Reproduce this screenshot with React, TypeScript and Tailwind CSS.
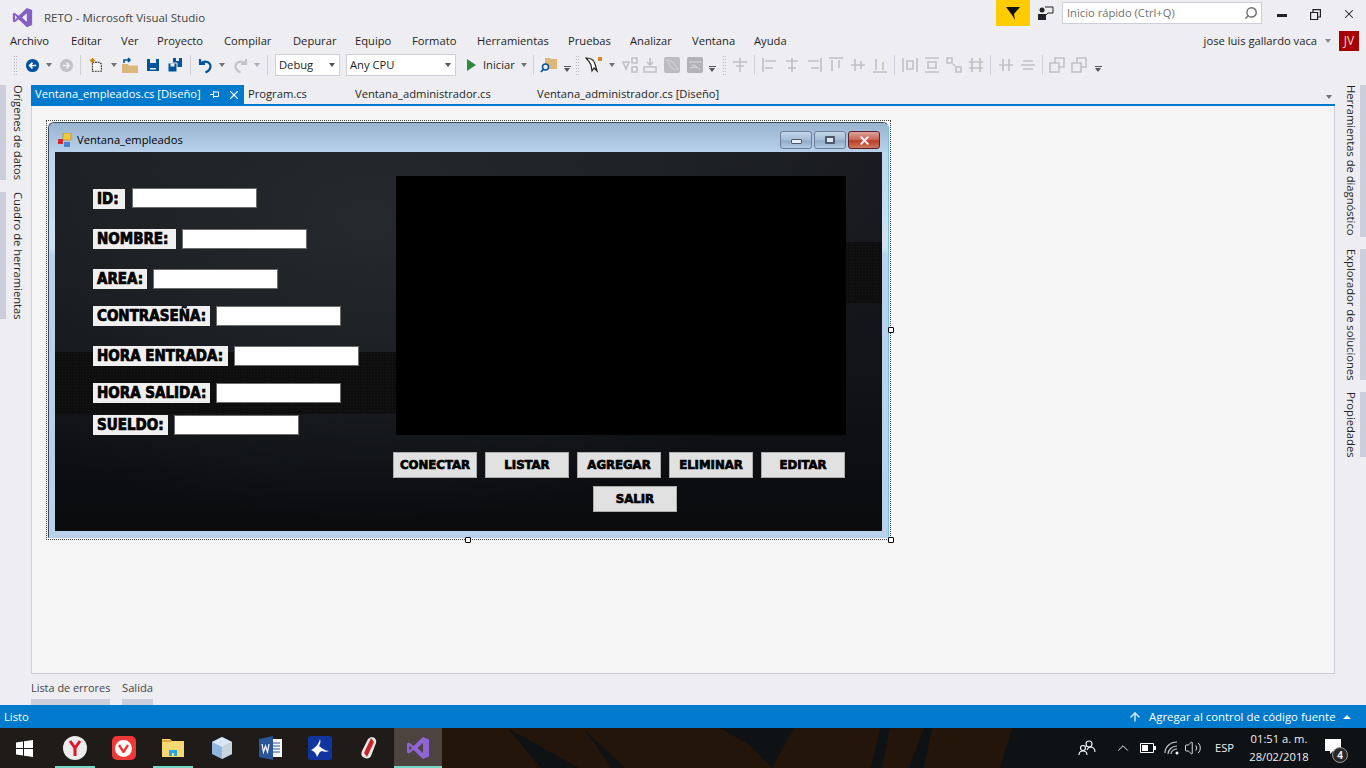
import type { ReactNode } from 'react';
import { ChevronUp, Search, X, ArrowUp, Volume2 } from 'lucide-react';

const menus = [
  ['Archivo', 10, 41],
  ['Editar', 71, 30],
  ['Ver', 121, 16],
  ['Proyecto', 157, 47],
  ['Compilar', 224, 49],
  ['Depurar', 293, 42],
  ['Equipo', 355, 37],
  ['Formato', 412, 45],
  ['Herramientas', 477, 71],
  ['Pruebas', 568, 42],
  ['Analizar', 630, 42],
  ['Ventana', 692, 42],
  ['Ayuda', 754, 34],
] as const;

const fields = [
  { name: 'ID:', top: 37, labelW: 32, inputX: 77 },
  { name: 'NOMBRE:', top: 77, labelW: 83, inputX: 127 },
  { name: 'AREA:', top: 117, labelW: 54, inputX: 98 },
  { name: 'CONTRASEÑA:', top: 154, labelW: 117, inputX: 161 },
  { name: 'HORA ENTRADA:', top: 194, labelW: 135, inputX: 179 },
  { name: 'HORA SALIDA:', top: 231, labelW: 117, inputX: 161 },
  { name: 'SUELDO:', top: 263, labelW: 75, inputX: 119 },
];

const buttons = [
  { name: 'CONECTAR', x: 338, y: 300 },
  { name: 'LISTAR', x: 430, y: 300 },
  { name: 'AGREGAR', x: 522, y: 300 },
  { name: 'ELIMINAR', x: 614, y: 300 },
  { name: 'EDITAR', x: 706, y: 300 },
  { name: 'SALIR', x: 538, y: 334 },
];

function VsLogo({ size, color = '#865fc5' }: { size: number; color?: string }) {
  return (
    <svg width={size} height={size} viewBox="0 0 24 24">
      <path
        fill={color}
        d="M17 1l6 2.500v17L17 23 7.500 14 3 17.500 1 16.500v-9l2-1L7.500 10 17 1zM3.500 9.500v5L6 12 3.500 9.500zM17 7l-5.500 5 5.500 5V7z"
      />
    </svg>
  );
}

function Caret({ color = '#717171' }: { color?: string }) {
  return <span className="block w-0 h-0 border-x-[3.5px] border-x-transparent border-t-[4px]" style={{ borderTopColor: color }} />;
}

function Grip() {
  return <span className="block w-[5px] h-[20px] bg-[radial-gradient(#a0a0a8_0.7px,transparent_0.8px)] bg-[length:2.5px_3px]" />;
}

function Sep() {
  return <span className="block w-px h-[20px] shrink-0 bg-[#ccced8]" />;
}

function Overflow() {
  return (
    <span className="flex flex-col items-center gap-[1px] mt-[8px]">
      <span className="w-[7px] h-px bg-[#555]" />
      <Caret color="#555" />
    </span>
  );
}

// one toolbar cell, fixed width so the icons land where the VS toolbar has them
function Slot({ w, children }: { w: number; children?: ReactNode }) {
  return (
    <span className="flex items-center justify-center shrink-0 h-[22px]" style={{ width: w }}>
      {children}
    </span>
  );
}

function Gray({ d }: { d: string }) {
  return (
    <svg width="18" height="18" viewBox="0 0 18 18" fill="none" stroke="#c0c0c5" strokeWidth="1.6">
      <path d={d} />
    </svg>
  );
}

function Combo({ w, text }: { w: number; text: string }) {
  return (
    <span className="flex items-center justify-between bg-white border border-[#ccced8] h-[22px] pl-[3px] pr-[4px] shrink-0 text-[#1e1e1e]" style={{ width: w }}>
      {text}
      <Caret color="#555" />
    </span>
  );
}

function Toolbar() {
  return (
    <div className="flex items-center h-[30px] pl-[12px] shrink-0 text-[#1e1e1e]">
      <Slot w={7}><Grip /></Slot>
      <Slot w={5} />
      <Slot w={16}>
        <svg width="15" height="15" viewBox="0 0 16 16">
          <circle cx="8" cy="8" r="7" fill="#00539c" />
          <path d="M12 8H5M8 5L5 8l3 3" stroke="#fff" strokeWidth="1.8" fill="none" />
        </svg>
      </Slot>
      <Slot w={18}><Caret /></Slot>
      <Slot w={16}>
        <svg width="15" height="15" viewBox="0 0 16 16">
          <circle cx="8" cy="8" r="7" fill="#c4c4c8" />
          <path d="M4 8h7M8 5l3 3-3 3" stroke="#eeeef2" strokeWidth="1.8" fill="none" />
        </svg>
      </Slot>
      <Slot w={6} />
      <Sep />
      <Slot w={7} />
      <Slot w={16}>
        <svg width="18" height="18" viewBox="0 0 18 18" fill="none">
          <path d="M5 6h8l2 2v8H5z" fill="#f6f6f6" stroke="#333" strokeWidth="1.3" strokeDasharray="2 1" />
          <path d="M5 1v6M2 4h6M3 2l4 4M7 2L3 6" stroke="#c98a1a" strokeWidth="1.2" />
        </svg>
      </Slot>
      <Slot w={20}><Caret /></Slot>
      <Slot w={12}>
        <svg width="18" height="18" viewBox="0 0 18 18" className="shrink-0">
          <path d="M1 8h6l1 1.500h9V17H1z" fill="#dcb67a" />
          <path d="M3 7V4h6M7 2l2 2-2 2" stroke="#00539c" strokeWidth="1.6" fill="none" />
        </svg>
      </Slot>
      <Slot w={34}>
        <svg width="14" height="14" viewBox="0 0 14 14">
          <path d="M1 1h12v12H1z" fill="#00539c" />
          <path d="M4 1h6v4H4z" fill="#eeeef2" />
          <path d="M4 10h6v1.500H4z" fill="#eeeef2" />
        </svg>
      </Slot>
      <Slot w={10}>
        <svg width="16" height="16" viewBox="0 0 16 16" className="shrink-0">
          <path d="M6 1h9v9H6z" fill="#00539c" />
          <path d="M9 1h3v3H9z" fill="#eeeef2" />
          <path d="M1 6h9v9H1z" fill="#00539c" stroke="#eeeef2" />
          <path d="M3.500 6.500h4v3h-4z" fill="#eeeef2" />
        </svg>
      </Slot>
      <Slot w={10} />
      <Sep />
      <Slot w={28}>
        <svg width="17" height="17" viewBox="0 0 17 17" fill="none">
          <path d="M3 2v5h5M3.500 7C6 3.500 13 4 13.500 9c.3 3-2 5-5 6.500" stroke="#00539c" strokeWidth="2.200" />
        </svg>
      </Slot>
      <Slot w={6}><Caret /></Slot>
      <Slot w={30}>
        <svg width="17" height="17" viewBox="0 0 17 17" fill="none">
          <path d="M14 2v5H9M13.500 7C11 3.500 4 4 3.500 9c-.3 3 2 5 5 6.500" stroke="#c4c4c8" strokeWidth="2.200" />
        </svg>
      </Slot>
      <Slot w={4}><Caret color="#b0b0b4" /></Slot>
      <Slot w={8} />
      <Sep />
      <Slot w={7} />
      <Combo w={65} text="Debug" />
      <Slot w={6} />
      <Combo w={110} text="Any CPU" />
      <Slot w={8} />
      <Slot w={14}>
        <span className="block w-0 h-0 border-y-[6px] border-y-transparent border-l-[9px] border-l-[#2f8a3c]" />
      </Slot>
      <span className="ml-[5px] w-[36px] whitespace-nowrap shrink-0">Iniciar</span>
      <Slot w={10}><Caret /></Slot>
      <Slot w={4} />
      <Sep />
      <Slot w={30}>
        <svg width="18" height="18" viewBox="0 0 18 18">
          <path d="M5 2h5l1 1h6v10H5z" fill="#dcb67a" />
          <circle cx="5.500" cy="11" r="3" fill="#eeeef2" stroke="#00539c" strokeWidth="1.500" />
          <path d="M3.500 13L1 16" stroke="#00539c" strokeWidth="1.800" />
        </svg>
      </Slot>
      <Slot w={6}><Overflow /></Slot>
      <Slot w={4} />
      <Slot w={6}><Grip /></Slot>
      <Slot w={28}>
        <svg width="19" height="18" viewBox="0 0 19 18" fill="none">
          <path d="M1 2c4 0 8 2 9 6l2 7-3-3-2 3-1-6C5 6 3 4 1 2z" fill="#fff" stroke="#222" strokeWidth="1.200" />
          <path d="M13 1h4v4h-4z" fill="#d08a2c" />
        </svg>
      </Slot>
      <Slot w={8}><Caret /></Slot>
      <Slot w={28}><Gray d="M2 6h6l-3 7zM11 2h5v5h-5zM11 11h5v5h-5z" /></Slot>
      <Slot w={12}>
        <svg width="18" height="18" viewBox="0 0 18 18" fill="none" stroke="#c0c0c5" strokeWidth="1.6" className="shrink-0">
          <path d="M9 2v7M6 6l3 3 3-3M3 11h12v5H3z" />
        </svg>
      </Slot>
      <Slot w={32}>
        <span className="flex items-center justify-center w-[16px] h-[16px] rounded-[2px] bg-[#bcbcc0]">
          <svg width="14" height="12" viewBox="0 0 14 12" fill="none" stroke="#dcdce0"><path d="M1 1c5 0 9 3 12 10M3 3c1 4 4 6 7 8" /></svg>
        </span>
      </Slot>
      <Slot w={14}>
        <span className="flex items-center justify-center w-[16px] h-[16px] shrink-0 rounded-[2px] bg-[#b3b3b7]">
          <svg width="14" height="12" viewBox="0 0 14 12" fill="none" stroke="#dcdce0"><path d="M1 3h12M4 6c3 0 6 2 8 5M2 9c3-1 5-1 7 0" /></svg>
        </span>
      </Slot>
      <Slot w={20}><Overflow /></Slot>
      <Slot w={4}><Grip /></Slot>
      <Slot w={28}><Gray d="M9 2v14M2 6h14M5 10h8" /></Slot>
      <Sep />
      <Slot w={4} />
      {['M2 2v14M4 5h11M4 12h8', 'M9 2v14M3 5h12M5 12h8', 'M16 2v14M3 5h11M6 12h8', 'M2 2h14M5 4v11M12 4v8', 'M2 9h14M6 3v12M12 5v8', 'M2 16h14M5 3v11M12 6v8'].map((d) => (
        <Slot w={22} key={d}><Gray d={d} /></Slot>
      ))}
      <Slot w={3} />
      <Sep />
      <Slot w={4} />
      {['M2 2v14M16 2v14M6 5h6v8H6z', 'M2 2h14M2 16h14M5 6h8v6H5z', 'M2 2h5v5H2zM11 11h5v5h-5zM8 8l2 2', 'M5 2v14M13 2v14M2 6h14M2 12h14'].map((d) => (
        <Slot w={22} key={d}><Gray d={d} /></Slot>
      ))}
      <Slot w={3} />
      <Sep />
      <Slot w={4} />
      <Slot w={22}><Gray d="M2 9h14M6 3v12M12 3v12" /></Slot>
      <Slot w={22}><Gray d="M2 9h14M4 5h10M4 13h10" /></Slot>
      <Slot w={3} />
      <Sep />
      <Slot w={3} />
      <Slot w={22}><Gray d="M2 7h9v9H2zM7 7V2h9v9h-5" /></Slot>
      <Slot w={22}><Gray d="M2 7h9v9H2zM7 7V2h9v9h-5" /></Slot>
      <Slot w={16}><Overflow /></Slot>
    </div>
  );
}

function VerticalTab({ text, h, side, mt = 0 }: { text: string; h: number; side: 'left' | 'right'; mt?: number }) {
  return (
    <div className="flex shrink-0" style={{ height: h, marginTop: mt }}>
      {side === 'left' && <span className="w-[6px] bg-[#cccedb]" />}
      <span className="[writing-mode:vertical-rl] leading-[16px] w-[20px] pl-[2px] whitespace-nowrap text-[#1e1e1e]">{text}</span>
      {side === 'right' && <span className="w-[6px] ml-[1px] bg-[#cccedb]" />}
    </div>
  );
}

function DocTabs() {
  return (
    <div className="flex items-stretch h-[19px] text-[#1e1e1e] relative">
      <div className="flex items-center w-[213px] bg-[#007acc] text-white pl-[4px]">
        <span className="w-[170px] whitespace-nowrap">Ventana_empleados.cs [Diseño]</span>
        <svg width="10" height="9" viewBox="0 0 10 9" fill="none" stroke="#fff" className="ml-[5px]">
          <path d="M0 4.500h3.500M3.500 1v7M3.500 2h5v4.500h-5" />
        </svg>
        <X size={14} className="ml-[7px]" />
      </div>
      <span className="ml-[4px] w-[107px] flex items-center">Program.cs</span>
      <span className="w-[182px] flex items-center whitespace-nowrap">Ventana_administrador.cs</span>
      <span className="flex items-center whitespace-nowrap">Ventana_administrador.cs [Diseño]</span>
      <span className="absolute right-[3px] top-[10px]"><Caret /></span>
    </div>
  );
}

function Handle({ className }: { className: string }) {
  return <span className={`absolute w-[6px] h-[6px] bg-white border border-black rounded-[1px] ${className}`} />;
}

function WinButton({ kind }: { kind: 'min' | 'max' | 'close' }) {
  if (kind === 'close') {
    return (
      <span className="w-[32px] h-[18px] rounded-[3px] border border-[#5a2030] bg-[linear-gradient(#dba39c,#c9614f_50%,#b83c26_55%,#cf7a5e)] flex items-center justify-center">
        <X size={13} strokeWidth={3.500} className="text-[#eef0f4]" />
      </span>
    );
  }
  return (
    <span className="w-[32px] h-[18px] rounded-[3px] border border-[#6d7f96] bg-[linear-gradient(#c3d5e8,#a4bcd6_50%,#8ea9c6_55%,#b5cce3)] flex items-center justify-center">
      {kind === 'min' ? (
        <span className="w-[11px] h-[5px] mt-[3px] bg-[#e8edf3] border border-[#4e5a6c] rounded-[1px]" />
      ) : (
        <span className="w-[10px] h-[8px] border-2 border-[#4e5a6c] bg-[#dfe8f2] rounded-[1px]" />
      )}
    </span>
  );
}

function DesignForm() {
  const band = 'absolute bg-[#0e0e0f] bg-[radial-gradient(#161617_1px,transparent_1px)] bg-[length:3px_3px]';
  const display = "font-bold text-black font-['DejaVu_Sans_Condensed','DejaVu_Sans',sans-serif] [-webkit-text-stroke:0.7px_#000]";
  return (
    <div className="relative w-[845px] h-[420px] ml-[14px] mt-[14px] border border-dotted border-[#444] p-[1px]">
      <Handle className="left-[418px] bottom-[-4px]" />
      <Handle className="right-[-4px] bottom-[-4px]" />
      <Handle className="right-[-4px] top-[206px]" />
      <div className="w-[841px] h-[416px] rounded-t-[6px] border border-[#3b4a5e] border-r-[#6fc3ea] border-b-[#b8d1ea] bg-[linear-gradient(#b9d1ea,#d0e1f2_30%,#b9d1ea_32%,#b9d1ea)] flex flex-col">
        <div className="h-[29px] flex items-center pt-[5px] pl-[9px] pr-[1px] rounded-t-[6px] bg-[linear-gradient(#99b4d1,#b9d1ea)] shrink-0">
          <svg width="14" height="14" viewBox="0 0 14 14" className="shrink-0">
            <path d="M0 6h5v5H0z" fill="#d12a2a" />
            <path d="M5 0h8v7H5z" fill="#f5c73d" stroke="#a88420" strokeWidth="0.600" />
            <path d="M6 9h6v5H6z" fill="#4d82d6" />
          </svg>
          <span className="ml-[5px] mt-[1px] text-black">Ventana_empleados</span>
          <span className="ml-auto flex gap-[2px] mr-[7px]">
            <WinButton kind="min" />
            <WinButton kind="max" />
            <WinButton kind="close" />
          </span>
        </div>
        <div className="relative ml-[6px] w-[827px] h-[379px] overflow-hidden bg-[radial-gradient(ellipse_520px_300px_at_38%_18%,#25292e,transparent),linear-gradient(#1a1c21,#111317_60%,#0a0b0d)]">
          <span className={`${band} left-0 top-[200px] w-[341px] h-[62px]`} />
          <span className={`${band} left-[791px] top-[90px] w-[36px] h-[61px]`} />
          <span className="absolute left-[341px] top-[24px] w-[450px] h-[259px] bg-black" />
          {fields.map((f) => (
            <div key={f.name}>
              <span
                className={`absolute left-[38px] h-[20px] bg-[#f0f0f0] pl-[4px] pt-[1px] flex items-center text-[15px] whitespace-nowrap ${display}`}
                style={{ top: f.top, width: f.labelW }}
              >
                {f.name}
              </span>
              <span
                className="absolute w-[125px] h-[20px] bg-white border border-[#6d6d6d]"
                style={{ top: f.top - (f.name === 'ID:' ? 1 : 0), left: f.inputX }}
              />
            </div>
          ))}
          {buttons.map((b) => (
            <span
              key={b.name}
              className={`absolute w-[84px] h-[26px] bg-[#e1e1e1] border border-[#adadad] flex items-center justify-center text-[13px] ${display}`}
              style={{ left: b.x, top: b.y }}
            >
              {b.name}
            </span>
          ))}
        </div>
      </div>
    </div>
  );
}

function TaskIcon({ active, lit, children }: { active?: boolean; lit?: boolean; children: ReactNode }) {
  return (
    <div className={`relative h-[40px] flex items-center justify-center shrink-0 ${active ? 'w-[48px] ml-[1px] bg-[#4d4440]' : 'w-[49px]'}`}>
      {children}
      {lit && <span className={`absolute bottom-0 h-[2px] bg-[#76d7c4] ${active ? 'inset-x-0' : 'left-[5px] right-[4px]'}`} />}
    </div>
  );
}

function Wallpaper() {
  return (
    <svg className="absolute inset-0" width="1366" height="40" viewBox="0 0 1366 40">
      <path d="M442 0H1012L1000 40H442z" fill="#24150b" />
      <path d="M1012 0H1366V40H1000z" fill="#0e1215" />
      <g fill="#0e1215">
        <path d="M507 0L579 40H541z" />
        <path d="M583 0L625 40H612z" />
        <path d="M720 0H794L772 40 751 18z" />
        <path d="M880 0H890L882 40H871z" />
        <path d="M924 0H932L924 40H909z" />
      </g>
    </svg>
  );
}

function Taskbar() {
  return (
    <div className="relative flex items-center h-[40px] bg-[#1e1b19] text-white overflow-hidden shrink-0">
      <Wallpaper />
      <div className="relative w-[48px] flex justify-center">
        <svg width="17" height="17" viewBox="0 0 17 17" fill="#fff">
          <path d="M0 2.500l7-1v6.500H0zM8 1.300L17 0v8H8zM0 9h7v6.500l-7-1zM8 9h9v8l-9-1.300z" />
        </svg>
      </div>
      <div className="relative w-[2px]" />
      <TaskIcon lit>
        <span className="w-[24px] h-[24px] rounded-full bg-[#ececec] flex items-center justify-center">
          <svg width="14" height="16" viewBox="0 0 14 16" fill="none" stroke="#e0162b" strokeWidth="3">
            <path d="M2 1l5 7 5-7M7 8v8" />
          </svg>
        </span>
      </TaskIcon>
      <TaskIcon>
        <span className="w-[24px] h-[24px] rounded-[5px] bg-[#ef3939] flex items-center justify-center">
          <span className="w-[17px] h-[17px] rounded-full bg-white flex items-center justify-center">
            <svg width="11" height="9" viewBox="0 0 11 9" fill="none" stroke="#ef3939" strokeWidth="2.400"><path d="M1 1l4.500 7L10 1" /></svg>
          </span>
        </span>
      </TaskIcon>
      <TaskIcon lit>
        <svg width="24" height="20" viewBox="0 0 24 20">
          <path d="M1 1h8l2 2h12v16H1z" fill="#f8d775" />
          <path d="M1 3h9" stroke="#e3a92e" strokeWidth="2" />
          <path d="M8 18v-6h8v6h-3v-3h-2v3z" fill="#29a7e1" />
        </svg>
      </TaskIcon>
      <TaskIcon>
        <svg width="24" height="24" viewBox="0 0 24 24">
          <path d="M12 1l10 5v12l-10 5-10-5V6z" fill="#8fb6dc" />
          <path d="M12 1l10 5-10 5L2 6z" fill="#d8e8f5" />
          <path d="M12 11l10-5v12l-10 5z" fill="#c7d3dd" />
        </svg>
      </TaskIcon>
      <TaskIcon>
        <svg width="24" height="24" viewBox="0 0 24 24">
          <path d="M12 3h11v18H12z" fill="#f5f7fb" />
          <path d="M14 7h7M14 10h7M14 13h7M14 16h7" stroke="#2a5699" />
          <path d="M0 3l14-3v24L0 21z" fill="#2a5699" />
          <path d="M3 8l1.500 8 2-6 2 6L10 8" stroke="#fff" fill="none" strokeWidth="1.200" />
        </svg>
      </TaskIcon>
      <TaskIcon>
        <span className="w-[24px] h-[24px] rounded-[3px] bg-[#10359e] flex items-center justify-center">
          <svg width="20" height="20" viewBox="0 0 20 20" fill="#fff">
            <path d="M10 1c1 3 0 5-1 7l4 3c2 1 4 2 6 2-2 1-5 1-7 0-2 0-3 2-5 6-1-4-3-6-6-7 4-2 8-6 9-11z" />
          </svg>
        </span>
      </TaskIcon>
      <TaskIcon>
        <svg width="18" height="24" viewBox="0 0 18 24">
          <path d="M11 1c4 0 6 3 5 6l-5 13c-1 3-6 3-8 1-2-1-2-4-1-6L8 3z" fill="#e9e9e9" />
          <path d="M11 2L4 17l3 4L14 6z" fill="#c8242a" />
        </svg>
      </TaskIcon>
      <TaskIcon active lit>
        <VsLogo size={24} color="#8f65d6" />
      </TaskIcon>
      <div className="relative ml-auto flex items-center h-full text-[#f0f0f0]">
        <svg width="18" height="16" viewBox="0 0 18 16" fill="none" stroke="#fff" strokeWidth="1.100">
          <circle cx="11" cy="4" r="3" />
          <circle cx="5" cy="8" r="2.500" />
          <path d="M1 15c0-3 2-4 4-4s4 1 4 4M9 10c1-2 2-3 3-3 3 0 5 2 5 5" />
        </svg>
        <span className="w-[18px]" />
        <ChevronUp size={18} strokeWidth={1.300} />
        <span className="w-[8px]" />
        <svg width="16" height="10" viewBox="0 0 16 10">
          <path d="M.5.500h13v9H.500z" fill="none" stroke="#fff" />
          <path d="M2 2h6v6H2z" fill="#fff" />
          <path d="M14 3h2v4h-2z" fill="#fff" />
        </svg>
        <span className="w-[8px]" />
        <svg width="16" height="14" viewBox="0 0 16 14" fill="none" stroke="#cfcfcf" strokeWidth="1.100">
          <path d="M1 12C1 6 6 1 13 1M4 13c0-4 4-8 9-8M7 13c0-3 3-5 6-5" />
          <circle cx="13" cy="12" r="1.500" fill="#fff" stroke="none" />
        </svg>
        <span className="w-[4px]" />
        <Volume2 size={18} strokeWidth={1.200} />
        <span className="w-[13px]" />
        <span className="w-[31px]">ESP</span>
        <div className="w-[66px] text-center leading-[18px]">
          <div>01:51 a. m.</div>
          <div>28/02/2018</div>
        </div>
        <span className="w-[13px]" />
        <div className="relative w-[41px] h-full flex items-center pb-[3px]">
          <svg width="16" height="15" viewBox="0 0 16 15" fill="#fff">
            <path d="M0 0h16v12H8l-3 3v-3H0z" />
          </svg>
          <span className="absolute left-[7px] top-[19px] w-[16px] h-[16px] rounded-full bg-[#2a2826] border border-[#999] text-[10px] font-bold flex items-center justify-center">4</span>
        </div>
      </div>
    </div>
  );
}

export default function App() {
  return (
    <div className="w-[1366px] h-[768px] overflow-hidden flex flex-col bg-[#eeeef2] text-[#1e1e1e] text-[11.2px] font-['Open_Sans','Noto_Sans',sans-serif]">
      {/* Title bar */}
      <div className="flex items-center h-[32px] shrink-0 relative">
        <span className="ml-[12px] mt-[2px]"><VsLogo size={21} /></span>
        <span className="ml-[11px] mt-[3px] text-[11.5px] text-[#444]">RETO - Microsoft Visual Studio</span>
        <div className="ml-auto flex items-start h-full">
          <span className="w-[34px] h-[26px] bg-[#ffcc00] flex items-center justify-center">
            <svg width="14" height="14" viewBox="0 0 14 14"><path d="M0 1h14L8 8l1 6-3-5z" fill="#111" /></svg>
          </span>
          <span className="w-[32px] h-[26px] flex items-center justify-center">
            <svg width="16" height="14" viewBox="0 0 16 14">
              <circle cx="4" cy="4" r="2.500" fill="#222" />
              <path d="M0 14V8h8v6z" fill="#222" />
              <path d="M7 1h8v6H10l-2 2" fill="none" stroke="#222" />
            </svg>
          </span>
          <span className="w-[200px] h-[22px] mt-[2px] bg-white border border-[#cccedb] flex items-center justify-between pl-[4px] pr-[3px] text-[#717171]">
            Inicio rápido (Ctrl+Q)
            <Search size={14} className="-scale-x-100 text-[#717171]" strokeWidth={2.500} />
          </span>
          <span className="w-[3px]" />
          <span className="w-[33px] h-[28px] flex items-center justify-center"><span className="w-[10px] h-[2.500px] mt-[3px] bg-[#222]" /></span>
          <span className="w-[34px] h-[28px] flex items-center justify-center">
            <svg width="11" height="11" viewBox="0 0 11 11" fill="none" stroke="#222" strokeWidth="1.200"><path d="M.6 3.500h7v7h-7zM3 3V.6h7.400V8H8" /></svg>
          </span>
          <span className="w-[34px] h-[28px] flex items-center justify-center"><X size={14} strokeWidth={1.800} className="text-[#222]" /></span>
        </div>
      </div>
      {/* Menu bar */}
      <div className="relative flex items-center h-[18px] shrink-0 text-[#1e1e1e]">
        {menus.map(([label, , w], i) => (
          <span key={label} className="whitespace-nowrap" style={{ marginLeft: menus[i][1] - (i ? menus[i - 1][1] + menus[i - 1][2] : 0), width: w }}>
            {label}
          </span>
        ))}
        <span className="ml-auto whitespace-nowrap">jose luis gallardo vaca</span>
        <span className="ml-[8px] mr-[8px]"><Caret color="#888" /></span>
        <span className="w-[20px] h-[20px] mr-[7px] bg-[#a80000] text-[#f3dcdc] flex items-center justify-center text-[12px]">JV</span>
      </div>
      <Toolbar />
      {/* Middle: rails + document well */}
      <div className="flex flex-1 min-h-0 pt-[5px]">
        <div className="w-[31px] shrink-0 flex flex-col relative">
          <VerticalTab side="left" text="Orígenes de datos" h={95} />
          <VerticalTab side="left" text="Cuadro de herramientas" h={127} mt={12} />
        </div>
        <div className="flex-1 min-w-0 flex flex-col">
          <DocTabs />
          <div className="h-[2px] bg-[#007acc] shrink-0" />
          <div className="flex-1 bg-[#f5f5f5] border-x border-b border-[#cccedb]">
            <DesignForm />
          </div>
        </div>
        <div className="w-[31px] shrink-0 flex flex-col pl-[4px]">
          <VerticalTab side="right" text="Herramientas de diagnóstico" h={152} />
          <VerticalTab side="right" text="Explorador de soluciones" h={131} mt={12} />
          <VerticalTab side="right" text="Propiedades" h={65} mt={12} />
        </div>
      </div>
      {/* Bottom tool tabs */}
      <div className="h-[31px] shrink-0 flex pl-[31px] gap-[12px] text-[#444]">
        <div className="flex flex-col justify-between w-[79px]">
          <span className="mt-[6px] whitespace-nowrap text-[10.9px]">Lista de errores</span>
          <span className="h-[6px] bg-[#cccedb]" />
        </div>
        <div className="flex flex-col justify-between w-[31px]">
          <span className="mt-[6px]">Salida</span>
          <span className="h-[6px] bg-[#cccedb]" />
        </div>
      </div>
      {/* Status bar */}
      <div className="h-[23px] shrink-0 bg-[#007acc] text-white flex items-center pl-[4px] pt-[1px]">
        <span>Listo</span>
        <ArrowUp size={14} strokeWidth={2.500} className="ml-auto text-[#d5e6f3]" />
        <span className="ml-[7px] w-[188px] whitespace-nowrap text-[11.4px]">Agregar al control de código fuente</span>
        <span className="ml-[6px] mr-[15px] w-0 h-0 border-x-[4px] border-x-transparent border-b-[4px] border-b-white" />
      </div>
      <Taskbar />
    </div>
  );
}
